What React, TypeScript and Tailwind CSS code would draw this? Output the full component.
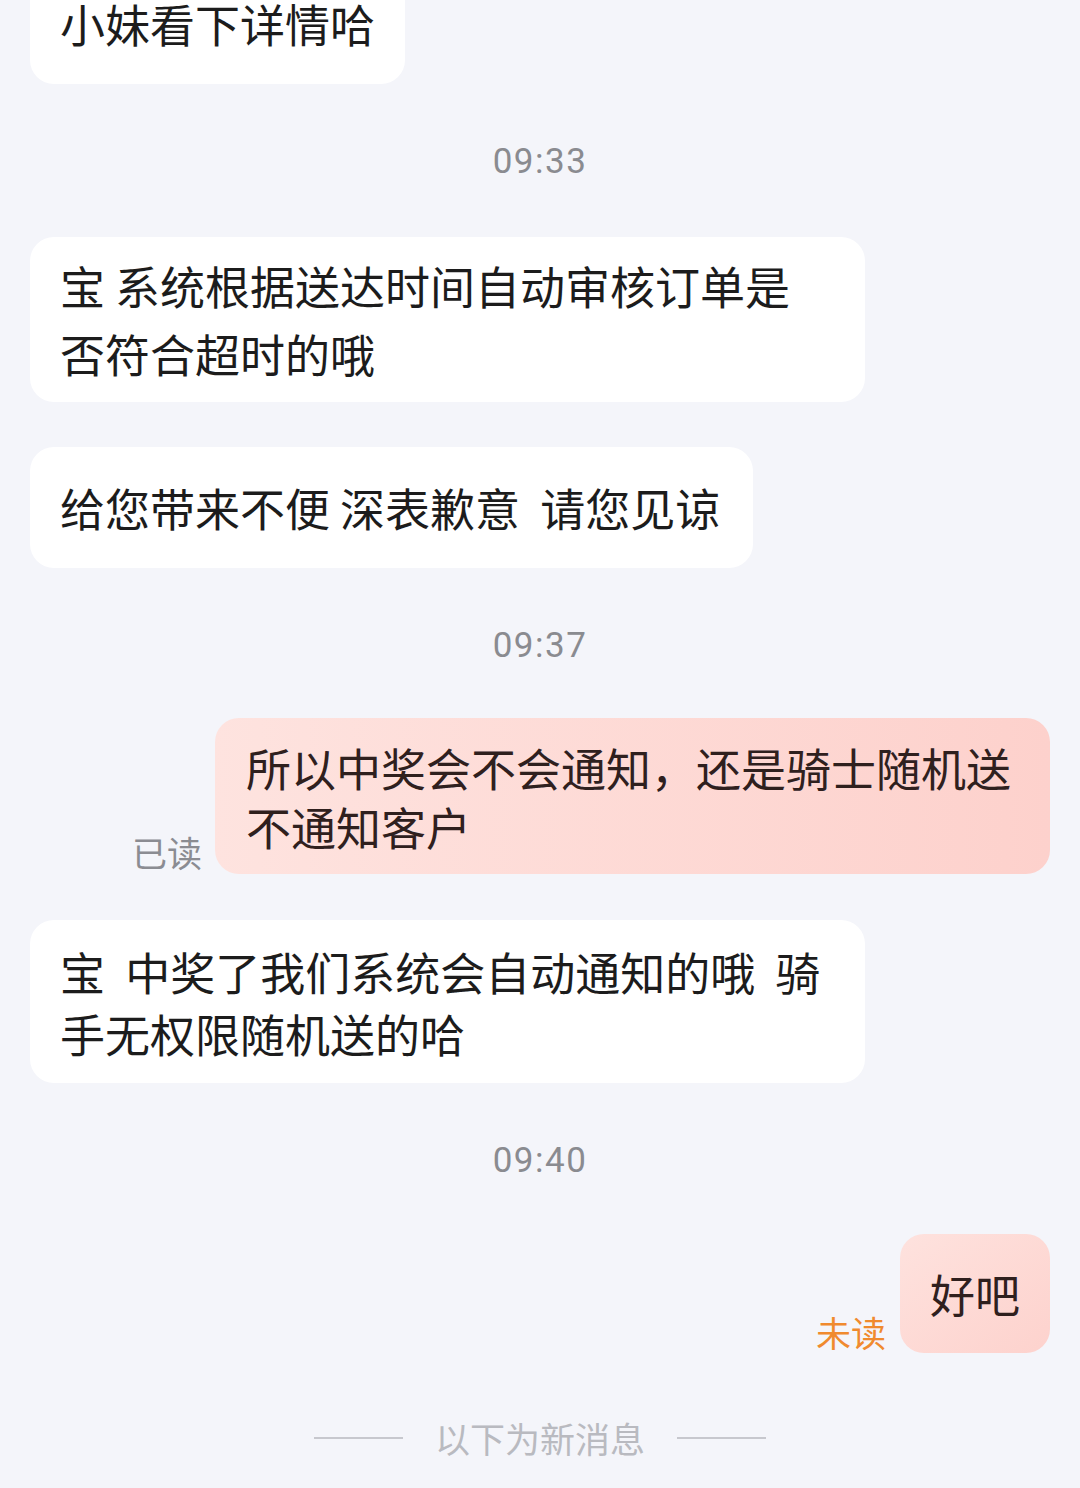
import React from "react";

const cjk = { fontFamily: '"Noto Sans CJK SC", "Noto Sans", sans-serif' };

function Time({ t, className }: { t: string; className: string }) {
  return (
    <div
      className={`h-[40px] flex items-center justify-center text-[35px] leading-[40px] tracking-[1.5px] text-[#8a8b90] ${className}`}
      style={{ fontFamily: 'Roboto, "Noto Sans", sans-serif' }}
    >
      {t}
    </div>
  );
}

export default function App() {
  return (
    <div
      className="w-[1080px] h-[1488px] overflow-hidden bg-[#f4f5fa] px-[30px] flex flex-col"
      style={cjk}
    >
      {/* bubble 1 */}
      <div className="mt-[-37px] self-start min-h-[121px] flex items-center rounded-[24px] bg-white px-[30px] text-[45px] leading-[62px] text-[#1c1c1c] whitespace-pre-wrap">
        小妹看下详情哈
      </div>

      <Time t="09:33" className="mt-[58px]" />

      {/* bubble 2 */}
      <div className="mt-[55px] self-start w-[835px] rounded-[24px] bg-white px-[30px] pt-[15px] pb-[14px] text-[45px] leading-[68px] text-[#1c1c1c] whitespace-pre-wrap">
        {"宝 系统根据送达时间自动审核订单是\n否符合超时的哦"}
      </div>

      {/* bubble 3 */}
      <div className="mt-[45px] self-start min-h-[121px] flex items-center rounded-[24px] bg-white pl-[30px] pr-[33px] text-[45px] leading-[62px] text-[#1c1c1c] whitespace-pre-wrap">
        {"给您带来不便 深表歉意  请您见谅"}
      </div>

      <Time t="09:37" className="mt-[58px]" />

      {/* pink bubble */}
      <div className="mt-[52px] self-end flex items-end gap-[13px]">
        <div className="text-[35px] leading-[40px] text-[#8b8c92] mb-[2px]">已读</div>
        <div className="w-[835px] rounded-[24px] bg-linear-to-r from-[#fee3df] to-[#fdd1cc] px-[31px] pt-[20px] pb-[18px] text-[45px] leading-[59px] text-[#2f201e] whitespace-pre-wrap">
          {"所以中奖会不会通知，还是骑士随机送\n不通知客户"}
        </div>
      </div>

      {/* bubble 5 */}
      <div className="mt-[46px] self-start w-[835px] rounded-[24px] bg-white px-[30px] pt-[21px] pb-[18px] text-[45px] leading-[62px] text-[#1c1c1c] whitespace-pre-wrap">
        {"宝  中奖了我们系统会自动通知的哦  骑\n手无权限随机送的哈"}
      </div>

      <Time t="09:40" className="mt-[58px]" />

      {/* 好吧 */}
      <div className="mt-[53px] self-end flex items-end gap-[14px]">
        <div className="text-[35px] leading-[40px] text-[#f08a2e] mb-[1px]">未读</div>
        <div className="min-h-[119px] flex items-center rounded-[24px] bg-linear-to-br from-[#fee2de] to-[#fdd2cd] px-[30px] text-[45px] leading-[62px] text-[#2f201e]">
          好吧
        </div>
      </div>

      {/* divider */}
      <div className="mt-[65px] h-[40px] flex items-center justify-center gap-[32px]">
        <div className="w-[89px] h-[2px] bg-[#c7c8ce]" />
        <div className="text-[35px] leading-[40px] text-[#b9bac0]">以下为新消息</div>
        <div className="w-[89px] h-[2px] bg-[#c7c8ce]" />
      </div>
    </div>
  );
}
